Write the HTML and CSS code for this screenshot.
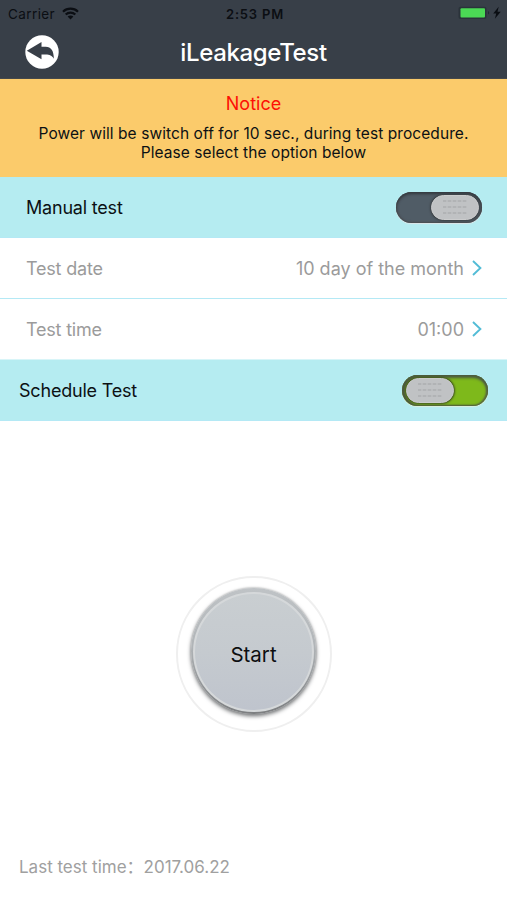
FILE: index.html
```html
<!DOCTYPE html>
<html lang="en">
<head>
    <meta charset="UTF-8" />
    <meta name="viewport" content="width=device-width, initial-scale=1" />
    <title>iLeakageTest</title>
    <link rel="stylesheet" href="styles.css">
</head>
<body>

    <!-- Header -->
    <header class="header">
        <div class="status-bar">
            <div class="carrier">
                <span class="carrier-name">Carrier</span>
                <svg class="wifi" width="17" height="13" viewBox="0 0 17 13">
                    <path d="M1 4.7C5.2.7 11.8.7 16 4.7M3.7 7.5c2.7-2.6 6.9-2.6 9.6 0" fill="none" stroke="#0b0e13" stroke-width="2.2" />
                    <path d="M5.6 9.6c1.7-1.5 4.1-1.5 5.8 0L8.5 12.5z" fill="#0b0e13" />
                </svg>
            </div>
            <span class="clock">2:53 PM</span>
            <div class="power">
                <svg width="44" height="14" viewBox="0 0 44 14">
                    <rect x=".5" y=".8" width="28" height="12.2" rx="2" fill="#2a333a" />
                    <rect x="2.5" y="2.2" width="24.5" height="9.3" rx="1" fill="#4bd955" />
                    <path d="M30 5c1.6.6 1.6 3 0 3.6z" fill="#222b32" />
                    <path d="M40.7.8L35.2 7.6h3l-1.3 5.1 5.8-7h-3.2z" fill="#0b0e13" />
                </svg>
            </div>
        </div>
        <div class="nav-bar">
            <button class="back" aria-label="Back">
                <svg width="34" height="34" viewBox="0 0 34 34">
                    <circle cx="17" cy="17" r="16.7" fill="#fff" />
                    <path d="M1.8 15.8L16.5 7v4.7h4.2c5.4 0 8 3.8 8.2 12-2-3.2-4.2-4.2-8.2-4.2h-4.2v4.8z" fill="#383f48" />
                </svg>
            </button>
            <h1 class="title">iLeakageTest</h1>
        </div>
    </header>

    <!-- Notice -->
    <section class="notice">
        <h2 class="notice-title">Notice</h2>
        <p class="notice-text">Power will be switch off for 10 sec., during test procedure.<br>Please select the option below</p>
    </section>

    <!-- Options -->
    <section class="options">
        <div class="row row-head">
            <span class="label">Manual test</span>
            <button class="toggle toggle-off" aria-label="Manual test">
                <span class="knob"><i></i><i></i><i></i></span>
            </button>
        </div>
        <div class="row">
            <span class="label">Test date</span>
            <span class="value">10 day of the month</span>
            <svg class="chevron" width="10" height="16" viewBox="0 0 10 16"><path d="M1 1l7.4 7L1 15" /></svg>
        </div>
        <div class="row row-time">
            <span class="label">Test time</span>
            <span class="value">01:00</span>
            <svg class="chevron" width="10" height="16" viewBox="0 0 10 16"><path d="M1 1l7.4 7L1 15" /></svg>
        </div>
        <div class="row row-head row-schedule">
            <span class="label">Schedule Test</span>
            <button class="toggle toggle-on" aria-label="Schedule Test">
                <span class="knob"><i></i><i></i><i></i></span>
            </button>
        </div>
    </section>

    <!-- Start button -->
    <main class="start-area">
        <div class="ring">
            <button class="start"><span class="start-face">Start</span></button>
        </div>
    </main>

    <footer class="last-test">Last test time：2017.06.22</footer>

</body>
</html>
```
FILE: styles.css
```css
* {
    box-sizing: border-box;
}
body {
    font-family: Inter, "Noto Sans CJK SC", sans-serif;
    background-color: #fff;
    margin: 0;
    height: 900px;
    display: flex;
    flex-direction: column;
    color: #0c1114;
    overflow: hidden;
    white-space: nowrap;
}
h1, h2, p {
    margin: 0;
    font-weight: 400;
}
button {
    border: none;
    padding: 0;
    background: none;
    font-family: inherit;
    cursor: pointer;
}
svg {
    display: block;
}

/* Header */
.header {
    height: 79px;
    background-color: #383f48;
    border-bottom: 1px solid #45484a;
}
.status-bar {
    height: 27px;
    display: grid;
    grid-template-columns: 1fr auto 1fr;
    align-items: center;
    padding: 0 5px 0 8px;
    color: #0b0e13;
    font-size: 13px;
}
.carrier {
    display: flex;
    align-items: center;
    gap: 7px;
}
.carrier-name {
    font-size: 13.5px;
    letter-spacing: 0.4px;
}
.clock {
    font-weight: 600;
    letter-spacing: 0.8px;
}
.power {
    justify-self: end;
}
.power svg {
    margin-top: -1px;
}
.nav-bar {
    height: 51px;
    display: grid;
    grid-template-columns: 34px 1fr 34px;
    align-items: center;
    padding: 0 25px;
}
.back svg {
    margin-top: -1px;
}
.title {
    color: #fff;
    font-size: 24px;
    font-weight: 500;
    letter-spacing: -0.35px;
    text-align: center;
}

/* Notice */
.notice {
    height: 98px;
    background-color: #fbcb6b;
    padding-top: 13px;
    text-align: center;
}
.notice-title {
    color: #fd1005;
    font-size: 18px;
    line-height: 24px;
}
.notice-text {
    margin-top: 8px;
    font-size: 15.5px;
    letter-spacing: 0.07px;
    line-height: 19px;
}

/* Options */
.row {
    height: 61px;
    display: flex;
    align-items: center;
    padding: 0 25px 0 26px;
    color: #9b9b9b;
    border-bottom: 1px solid #b4e9f5;
    font-size: 18px;
}
.row-head {
    background-color: #b5ecf1;
    color: #0c1114;
    justify-content: space-between;
}
.row-time {
    border-bottom-color: #d8f5f8;
}
.row-schedule {
    padding: 0 19px;
}
.label {
    letter-spacing: -0.2px;
    padding-top: 1px;
}
.value {
    margin-left: auto;
    margin-right: 8px;
    padding-top: 1px;
}
.chevron {
    fill: none;
    stroke: #52bcd6;
    stroke-width: 1.9;
}

/* Toggle switch */
.toggle {
    width: 86px;
    height: 31px;
    display: flex;
    align-items: center;
    padding: 0 3px;
    border-radius: 16px;
}
.toggle-off {
    justify-content: flex-end;
    background-color: #505c66;
    box-shadow: inset 0 2px 3px #343a40, inset 0 0 2px 1px #4b4e51, 0 1px 1px #dce6e8;
}
.toggle-on {
    padding-left: 4px;
    background-color: #7eb91b;
    box-shadow: inset 0 3px 3px #4c5c40, inset 2px 0 2px 1px #4c5640, inset -2px 0 2px #566344, 0 1px 1px #dcefdc;
}
.knob {
    width: 48px;
    height: 25px;
    display: flex;
    flex-direction: column;
    align-items: center;
    justify-content: center;
    gap: 4px;
    border-radius: 13px;
    background-color: #c0c2c4;
    border: 1px solid #cbcccd;
    box-shadow: 0 0 2px 1px #3c4246;
}
.toggle-on .knob {
    box-shadow: 0 0 2px 1px #415421;
}
.knob i {
    width: 24px;
    height: 2px;
    background: repeating-linear-gradient(90deg, #b1b3b5 0 3px, #bbbdbf 3px 5px);
}

/* Start button */
.start-area {
    flex: 1;
    display: flex;
    justify-content: center;
    padding-top: 155px;
}
.ring {
    width: 156px;
    height: 156px;
    display: flex;
    justify-content: center;
    padding-top: 10px;
    border: 2px solid #efefef;
    border-radius: 50%;
}
.start {
    width: 125px;
    height: 126px;
    display: flex;
    justify-content: center;
    padding-top: 4px;
    border-radius: 50%;
    background: linear-gradient(#bfc3c6, #b1b5b8 45%, #7c7e80);
    box-shadow: 0 0 2px #9a9c9e, 0 2px 4px #6b6d6f;
}
.start-face {
    width: 121px;
    height: 120px;
    display: flex;
    align-items: center;
    justify-content: center;
    padding-top: 5px;
    border: 2px solid #d5d8da;
    border-radius: 50%;
    background: linear-gradient(#c9ced1, #c5cacf 50%, #bfc4cd);
    color: #0c0e10;
    font-size: 20.5px;
}

/* Last test */
.last-test {
    height: 68px;
    padding: 21px 19px 0;
    color: #a0a0a0;
    font-size: 17px;
    line-height: 28px;
}
```
